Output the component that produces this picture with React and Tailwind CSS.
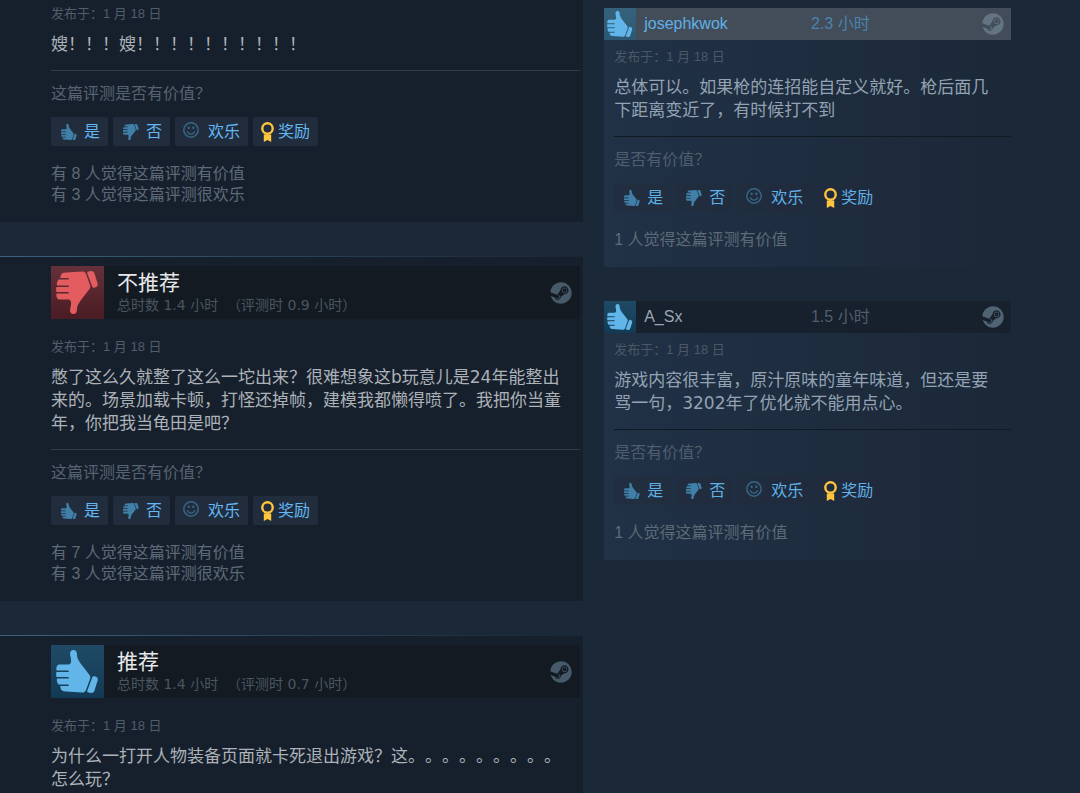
import React from 'react'
import { FaSteam } from 'react-icons/fa'

const LEFT_REVIEWS = [
    {
        id: 1,
        date: '1 月 18 日',
        text: '嫂!!!嫂!!!!!!!!!!',
        stats: ['有 8 人觉得这篇评测有价值', '有 3 人觉得这篇评测很欢乐']
    },
    {
        id: 2,
        recommended: false,
        title: '不推荐',
        hours: '总时数 1.4 小时 (评测时 0.9 小时)',
        date: '1 月 18 日',
        text: '憋了这么久就整了这么一坨出来?很难想象这b玩意儿是24年能整出来的。场景加载卡顿,打怪还掉帧,建模我都懒得喷了。我把你当童年,你把我当龟田是吧?',
        stats: ['有 7 人觉得这篇评测有价值', '有 3 人觉得这篇评测很欢乐']
    },
    {
        id: 3,
        recommended: true,
        title: '推荐',
        hours: '总时数 1.4 小时 (评测时 0.7 小时)',
        date: '1 月 18 日',
        text: '为什么一打开人物装备页面就卡死退出游戏?这。。。。。。。。。怎么玩?',
        stats: []
    }
]

const RIGHT_REVIEWS = [
    {
        id: 4,
        name: 'josephkwok',
        hours: '2.3 小时',
        active: true,
        date: '1 月 18 日',
        text: '总体可以。如果枪的连招能自定义就好。枪后面几下距离变近了,有时候打不到',
        stats: ['1 人觉得这篇评测有价值']
    },
    {
        id: 5,
        name: 'A_Sx',
        hours: '1.5 小时',
        active: false,
        date: '1 月 18 日',
        text: '游戏内容很丰富,原汁原味的童年味道,但还是要骂一句,3202年了优化就不能用点心。',
        stats: ['1 人觉得这篇评测有价值']
    }
]

// half-width marks in the data are shown as full-width ones
function wide(s) {
    return s
        .replace(/!/g, '\uFF01')
        .replace(/\?/g, '\uFF1F')
        .replace(/,/g, '\uFF0C')
        .replace(/ \(/g, '\u00A0 \uFF08')
        .replace(/\)/g, '\uFF09')
}

function Thumb({ down, className }) {
    return (
        <svg viewBox="0 0 53 53" className={className} aria-hidden="true">
            <g transform={down ? 'matrix(1 0 0 -1 0 53)' : undefined}>
                <path
                    fill="currentColor"
                    d="M19 9C19 6 21 4.500 23 5C25 5.500 26 7 26 10C26 13 27.500 15.500 30 19L38.500 30C39.500 31.500 39.500 32.500 39 34L35 45C34 47 33 47.500 31 47.500L15 46.500C12 46.500 10 45.500 9.500 43L9.300 41H17C18.300 41 18.300 39.400 17 39.400H7.500C6 37.500 5.500 35.500 6 33.500H17C18.300 33.500 18.300 31.900 17 31.900H5.500C5 30 5 28.500 5.500 27H17C18.300 27 18.300 25.400 17 25.400H5.500C5 22 6 19.500 8.500 19.500H17C19.500 19.500 20.500 17.500 20 14.500Z"
                />
                <path
                    fill="currentColor"
                    d="M41 33C41.500 31.500 42 31 43.500 31.300C46 32 47 33 46.800 35L43.500 45.500C43 47 42 48 40.500 48L37.500 47.500C36 47.300 36 46.500 36.500 45Z"
                />
            </g>
        </svg>
    )
}

function Smiley() {
    return (
        <svg viewBox="0 0 16 16" className="w-4 h-4 text-[#386686]" fill="none" stroke="currentColor" aria-hidden="true">
            <circle cx="8" cy="8" r="7.200" strokeWidth="1.500" />
            <path d="M4.200 9.300c.8 2 2.200 2.900 3.800 2.900s3-.9 3.800-2.900" strokeWidth="1.200" />
            <ellipse cx="5.700" cy="5.800" rx="1.100" ry="1.400" fill="currentColor" stroke="none" />
            <ellipse cx="10.300" cy="5.800" rx="1.100" ry="1.400" fill="currentColor" stroke="none" />
        </svg>
    )
}

function Award() {
    return (
        <svg viewBox="0 0 13 20" className="w-[13px] h-5" aria-hidden="true">
            <circle cx="6.500" cy="6.500" r="5.200" fill="none" stroke="#ffc53d" strokeWidth="2.400" />
            <path fill="#ffc53d" d="M2.800 12.500h7.400V20l-3.700-1.900L2.800 20z" />
        </svg>
    )
}

function VoteButton({ side, children }) {
    return (
        <button
            type="button"
            className={`h-[29px] px-2 rounded-xs flex items-center text-base leading-5 ${
                side ? 'bg-[#212b3c]/50 text-[#5fb0e6]' : 'bg-[#212c3d] text-[#61b8f3]'
            }`}
        >
            {children}
        </button>
    )
}

function VoteBar({ side }) {
    return (
        <div className="mt-[13px] flex gap-[5px]">
            <VoteButton side={side}>
                <Thumb className="w-5 h-5 mr-[5px] text-[#407fa7]" />是
            </VoteButton>
            <VoteButton side={side}>
                <Thumb down className="w-5 h-5 mr-[5px] text-[#407fa7]" />否
            </VoteButton>
            <VoteButton side={side}>
                <span className="w-5 mr-[5px] pb-1">
                    <Smiley />
                </span>
                欢乐
            </VoteButton>
            <VoteButton side={side}>
                <span className="mr-1">
                    <Award />
                </span>
                奖励
            </VoteButton>
        </div>
    )
}

function Stats({ items }) {
    return (
        <div className="mt-[17px] text-base leading-[21px] text-[#5d6a78]">
            {items.map((s) => (
                <p key={s}>{s}</p>
            ))}
        </div>
    )
}

function ReviewCard({ review }) {
    const down = review.recommended === false

    return (
        <article className="bg-[#16202c]">
            {review.title && (
                <>
                    <div className="h-px bg-linear-to-r from-[#3b637f] to-[#1a2533]" />
                    <div className="pl-[51px] pt-[9px] pr-[3px]">
                        <header className="flex items-center bg-[#131a22]">
                            <div
                                className={`w-[53px] h-[53px] bg-linear-to-b ${
                                    down ? 'from-[#65313a] to-[#4a1c23] text-[#e25c60]' : 'from-[#1f4a66] to-[#123a55] text-[#61b5e8]'
                                }`}
                            >
                                <Thumb down={down} className="w-full h-full" />
                            </div>
                            <div className="ml-[13px] flex-1">
                                <h2 className="text-[21px] leading-6 text-[#e6e8ea]">{review.title}</h2>
                                <p className="text-sm leading-5 text-[#4b5560] font-[DejaVu_Sans,Noto_Sans_CJK_SC,sans-serif]">
                                    {wide(review.hours)}
                                </p>
                            </div>
                            <FaSteam className="w-[22px] h-[22px] mr-2 text-[#465a69]" />
                        </header>
                    </div>
                </>
            )}

            <div className="pl-[51px] pr-[3px] pb-[17px]">
                <p className={`${review.title ? 'pt-5' : 'pt-[6px]'} text-[13px] leading-4 text-[#505d6a]`}>
                    发布于：{review.date}
                </p>
                <p className="mt-[11px] pr-3 text-[17px] leading-[23px] text-[#acb2b8] font-[DejaVu_Sans,Noto_Sans_CJK_SC,sans-serif]">
                    {wide(review.text)}
                </p>
                {review.stats.length > 0 && (
                    <>
                        <hr className="mt-[14px] border-[#323d49]" />
                        <p className="mt-[13px] text-base leading-5 text-[#566371]">这篇评测是否有价值？</p>
                        <VoteBar />
                        <Stats items={review.stats} />
                    </>
                )}
            </div>
        </article>
    )
}

function SideCard({ review }) {
    return (
        <article className="bg-linear-to-r from-[#213146] to-[#1b2838]">
            <header className={`flex items-center h-8 ${review.active ? 'bg-[#434d59]' : 'bg-[#17202d]'}`}>
                <div
                    className={`w-8 h-8 text-[#61b5e8] bg-linear-to-b ${
                        review.active ? 'from-[#36627e] to-[#2c5874]' : 'from-[#1f4a66] to-[#123a55]'
                    }`}
                >
                    <Thumb className="w-full h-full" />
                </div>
                <a
                    href="#profile"
                    className={`ml-2 w-[41%] text-base leading-5 ${review.active ? 'text-[#5fb0e6]' : 'text-[#9aa7b3]'}`}
                >
                    {review.name}
                </a>
                <span className={`flex-1 text-base leading-5 ${review.active ? 'text-[#4a84ad]' : 'text-[#505e6c]'}`}>
                    {review.hours}
                </span>
                <FaSteam className={`w-[22px] h-[22px] mr-[7px] ${review.active ? 'text-[#637482]' : 'text-[#4f6373]'}`} />
            </header>

            <div className="pl-[10px] pb-[17px]">
                <p className="pt-[9px] text-[13px] leading-4 text-[#4b5967]">发布于：{review.date}</p>
                <p className="mt-[11px] pr-4 text-[17px] leading-[23px] text-[#93a3b3] font-[DejaVu_Sans,Noto_Sans_CJK_SC,sans-serif]">
                    {wide(review.text)}
                </p>
                <hr className="mt-[14px] border-[#111922]" />
                <p className="mt-[13px] text-base leading-5 text-[#4f5e6d]">是否有价值？</p>
                <VoteBar side />
                <Stats items={review.stats} />
            </div>
        </article>
    )
}

export default function App() {
    return (
        <main className="h-screen overflow-hidden bg-[#1b2838] grid grid-cols-[54%_1fr] gap-[21px] items-start [text-spacing-trim:space-all] font-[Liberation_Sans,Noto_Sans_CJK_SC,sans-serif]">
            <section className="flex flex-col gap-[34px]">
                {LEFT_REVIEWS.map((r) => (
                    <ReviewCard key={r.id} review={r} />
                ))}
            </section>

            <section className="pt-2 pr-[69px] flex flex-col gap-[34px]">
                {RIGHT_REVIEWS.map((r) => (
                    <SideCard key={r.id} review={r} />
                ))}
            </section>
        </main>
    )
}
